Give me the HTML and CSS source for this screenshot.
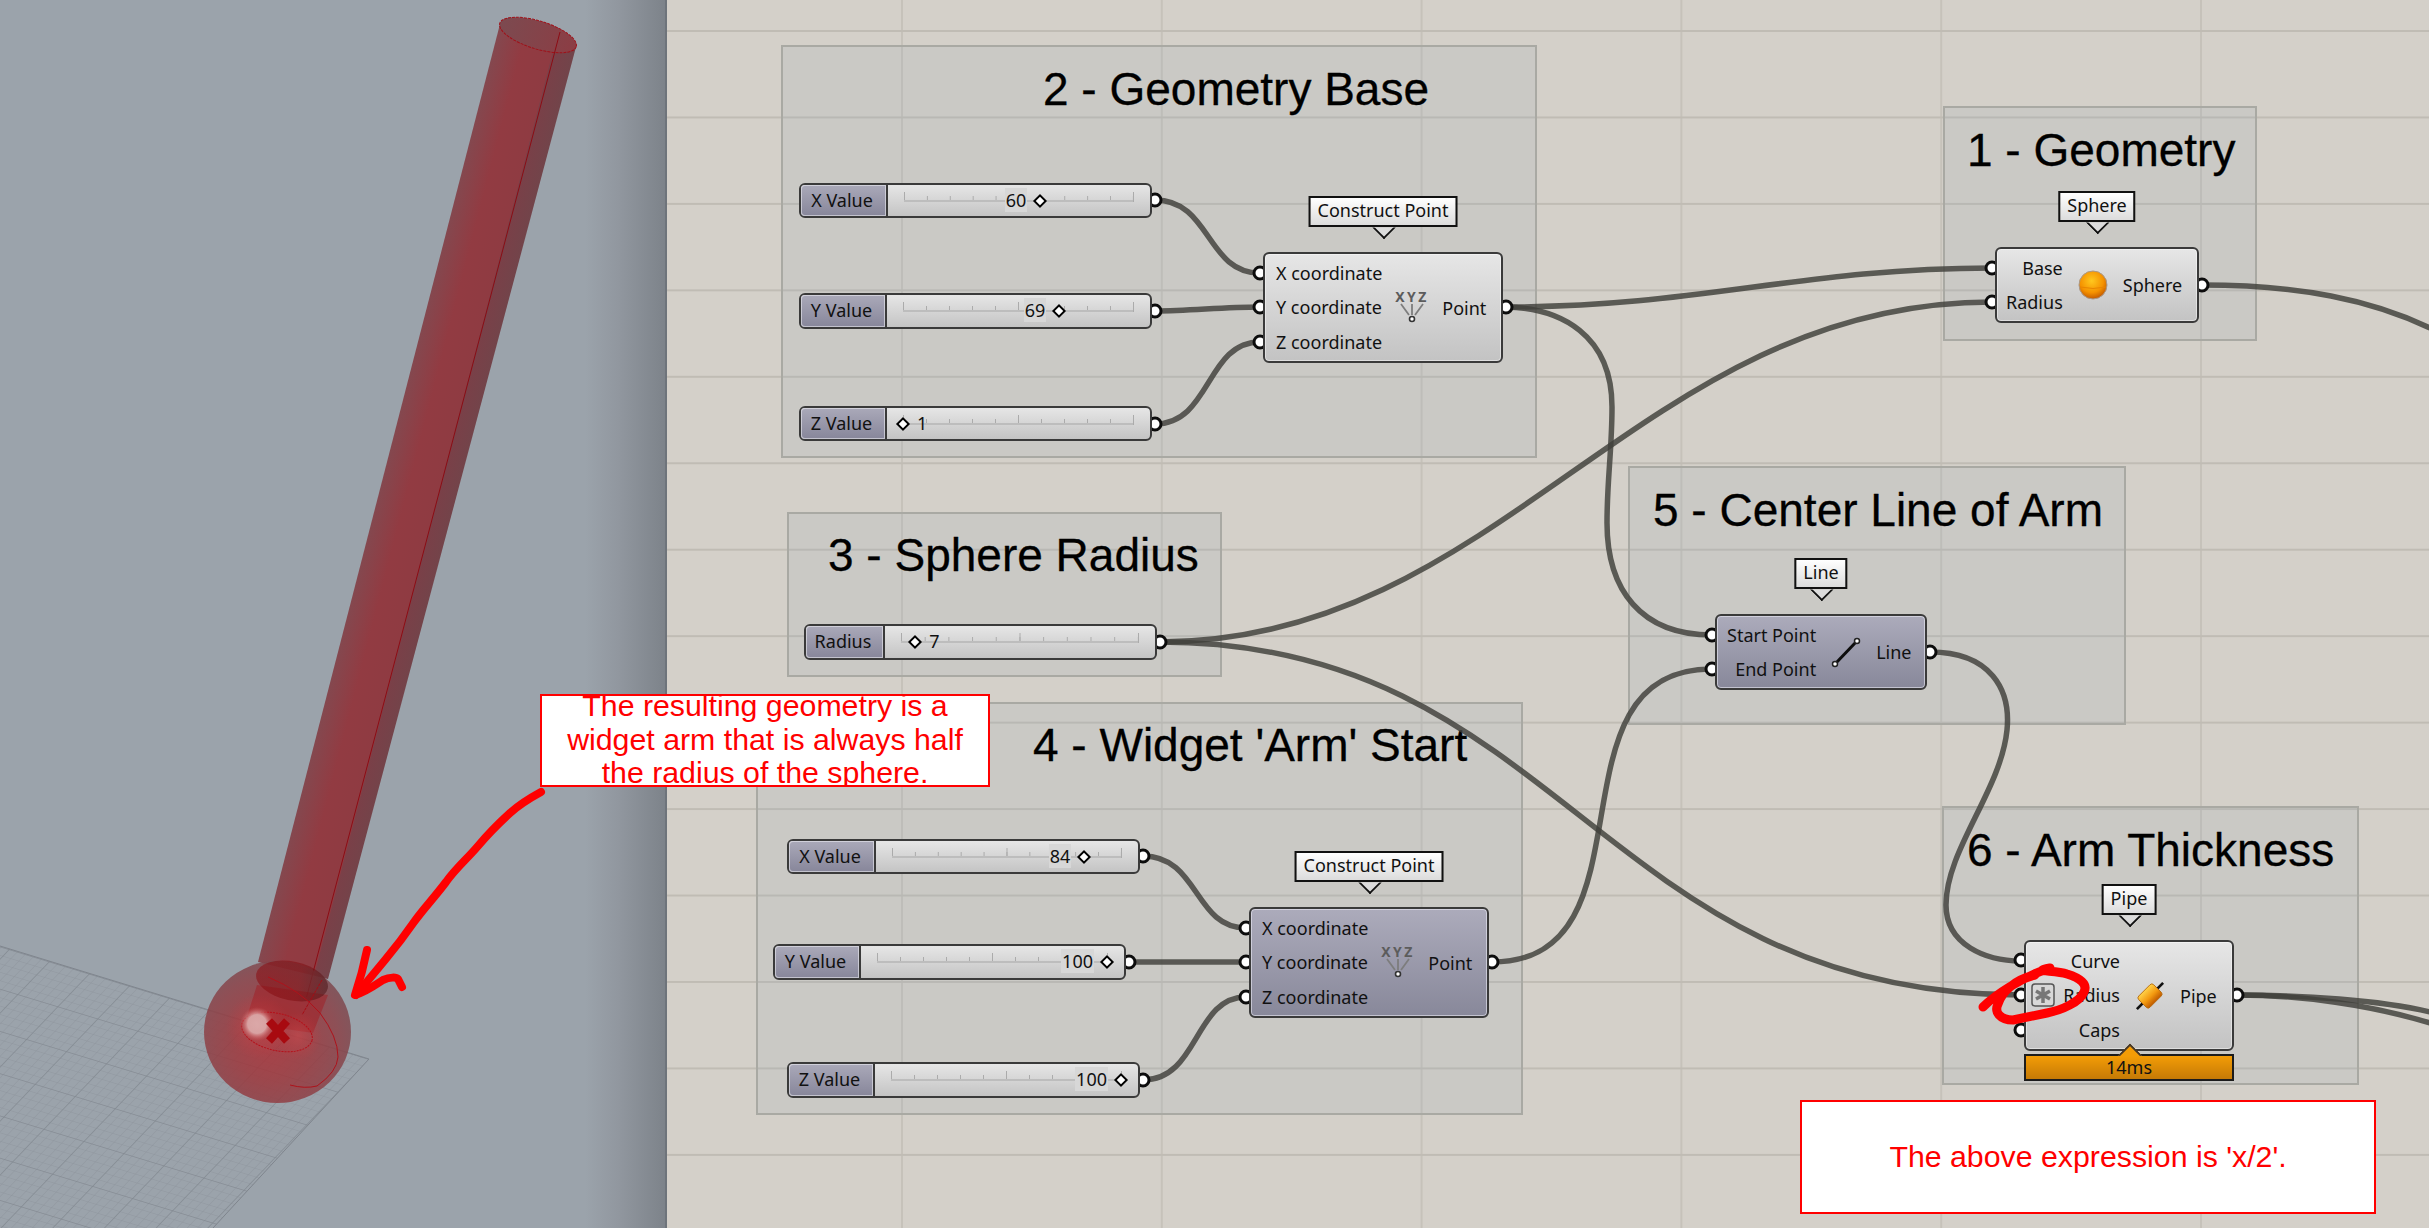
FILE: index.html
```html
<!DOCTYPE html>
<html lang="en">
<head>
<meta charset="utf-8">
<title>Grasshopper definition</title>
<link rel="stylesheet" href="styles.css">
</head>
<body>
<main class="app">
  <section class="viewport">
    <svg class="scene" viewBox="0 0 665 1228" width="665" height="1228" aria-hidden="true">
      <defs>
        <pattern id="minor" width="10" height="10" patternUnits="userSpaceOnUse" patternTransform="matrix(.8 .244 -.626 .654 369 1059)">
          <path d="M0 0H10M0 0V10" fill="none" stroke="#8c939b" stroke-width="1"/>
        </pattern>
        <pattern id="major" width="50" height="50" patternUnits="userSpaceOnUse" patternTransform="matrix(.8 .244 -.626 .654 369 1059)">
          <path d="M0 0H50M0 0V50" fill="none" stroke="#7f858d" stroke-width="1.3"/>
        </pattern>
        <linearGradient id="pipeBody" gradientUnits="userSpaceOnUse" x1="346" y1="620" x2="421.5" y2="639.5">
          <stop offset="0" stop-color="#84484f"/>
          <stop offset=".35" stop-color="#923b42"/>
          <stop offset=".74" stop-color="#8f3b42"/>
          <stop offset=".75" stop-color="#7a4048"/>
          <stop offset="1" stop-color="#72444a"/>
        </linearGradient>
        <linearGradient id="pipeCap" x1="0" x2="1" y1="0" y2="0">
          <stop offset="0" stop-color="#7c4a50"/>
          <stop offset="1" stop-color="#8c3d44"/>
        </linearGradient>
        <radialGradient id="ball" gradientUnits="userSpaceOnUse" cx="270" cy="1045" r="92">
          <stop offset="0" stop-color="#ab2f35"/>
          <stop offset=".4" stop-color="#9c363b"/>
          <stop offset=".75" stop-color="#8b4046"/>
          <stop offset="1" stop-color="#784a50"/>
        </radialGradient>
        <linearGradient id="capShade" x1="0" x2="1" y1="0" y2="0">
          <stop offset="0" stop-color="#8a0a0f"/>
          <stop offset=".6" stop-color="#800d11"/>
          <stop offset="1" stop-color="#4a1517"/>
        </linearGradient>
        <radialGradient id="shine">
          <stop offset="0" stop-color="#dba8a8"/>
          <stop offset=".55" stop-color="#d8a2a2"/>
          <stop offset="1" stop-color="#c9595c" stop-opacity="0"/>
        </radialGradient>
        <radialGradient id="glow">
          <stop offset="0" stop-color="#cf4a4e" stop-opacity=".5"/>
          <stop offset="1" stop-color="#c9393e" stop-opacity="0"/>
        </radialGradient>
      </defs>
      <polygon points="0,946 369,1059 213,1228 0,1228" fill="url(#minor)"/>
      <polygon points="0,946 369,1059 213,1228 0,1228" fill="url(#major)"/>
      <polyline points="0,946 369,1059 213,1228" fill="none" stroke="#7f858d" stroke-width="1"/>
      <path d="M500 24 L576 47 L328 979 L258 962 Z" fill="url(#pipeBody)"/>
      <ellipse cx="538" cy="35" rx="40" ry="14" transform="rotate(17 538 35)" fill="url(#pipeCap)" stroke="#a01018" stroke-width="1" stroke-dasharray="3 1"/>
      <path d="M560 32 L555 51 L405.600 620 L306.600 997" fill="none" stroke="#8c0c14" stroke-width="1"/>
      <ellipse cx="277.500" cy="1032" rx="73.500" ry="71" fill="url(#ball)" fill-opacity=".84"/>
      <path d="M257 985 L328 995 L313 1033 L245 1023 Z" fill="#a3171c" fill-opacity=".45"/>
      <ellipse cx="292" cy="981" rx="36.500" ry="19.500" transform="rotate(12 292 981)" fill="url(#capShade)" fill-opacity=".55"/>
      <path d="M322 980L302 1015" fill="none" stroke="#a50c14" stroke-width="1" stroke-dasharray="3 1"/>
      <circle cx="258" cy="1026" r="32" fill="url(#glow)"/>
      <circle cx="298" cy="1036" r="24" fill="url(#glow)"/>
      <ellipse cx="277" cy="1032" rx="36" ry="18.500" transform="rotate(13 277 1032)" fill="none" stroke="#b5101a" stroke-width="1" stroke-dasharray="2 1"/>
      <circle cx="257" cy="1024" r="17" fill="url(#shine)"/>
      <path d="M269 1021L287 1041M287 1021L269 1041" stroke="#a80a10" stroke-width="8" fill="none"/>
      <path d="M268 977 Q300 990 320 1013 Q338 1037 338 1057 Q337 1072 317 1086 Q305 1089 290 1085" fill="none" stroke="#ae121b" stroke-width="1"/>
    </svg>
  </section>

  <section class="canvas">
    <div class="group g1"><h2 class="title">1 - Geometry</h2></div>
    <div class="group g2"><h2 class="title">2 - Geometry Base</h2></div>
    <div class="group g3"><h2 class="title">3 - Sphere Radius</h2></div>
    <div class="group g4"><h2 class="title">4 - Widget 'Arm' Start</h2></div>
    <div class="group g5"><h2 class="title">5 - Center Line of Arm</h2></div>
    <div class="group g6"><h2 class="title">6 - Arm Thickness</h2></div>

    <svg class="wires" viewBox="666 0 1763 1228" width="1763" height="1228" aria-hidden="true">
      <g class="wire">
        <path d="M1154 200 C1210 200 1205 273 1259 273"/>
        <path d="M1154 311 C1190 311 1220 307 1259 307"/>
        <path d="M1154 424 C1210 424 1205 342 1259 342"/>
        <path d="M1505 307 C1700 307 1800 268 1991 268"/>
        <path d="M1505 307 C1560 308 1611 335 1611 407 C1611 450 1606 480 1606 523 C1606 590 1640 635 1711 635"/>
        <path d="M1159 642 C1500 642 1640 302 1991 302"/>
        <path d="M1159 642 C1560 642 1600 995 2020 995"/>
        <path d="M1142 856 C1198 856 1193 928 1245 928"/>
        <path d="M1128 962 L1245 962"/>
        <path d="M1142 1080 C1198 1080 1193 997 1245 997"/>
        <path d="M1491 962 C1660 962 1540 669 1711 669"/>
        <path d="M1929 652 C1990 652 2010 690 2006 730 C2000 790 1945 850 1945 905 C1945 945 1985 961 2020 961"/>
        <path d="M2201 285 C2300 285 2370 300 2429 328"/>
        <path d="M2236 995 C2300 995 2380 1000 2429 1012"/>
        <path d="M2236 995 C2300 995 2370 1005 2429 1023"/>
      </g>
      <g class="grip">
        <circle cx="1154" cy="200" r="6"/><circle cx="1154" cy="311" r="6"/><circle cx="1154" cy="424" r="6"/>
        <circle cx="1159" cy="642" r="6"/><circle cx="1142" cy="856" r="6"/><circle cx="1128" cy="962" r="6"/><circle cx="1142" cy="1080" r="6"/>
        <circle cx="1259" cy="273" r="6"/><circle cx="1259" cy="307" r="6"/><circle cx="1259" cy="342" r="6"/><circle cx="1505" cy="307" r="6"/>
        <circle cx="1245" cy="928" r="6"/><circle cx="1245" cy="962" r="6"/><circle cx="1245" cy="997" r="6"/><circle cx="1491" cy="962" r="6"/>
        <circle cx="1991" cy="268" r="6"/><circle cx="1991" cy="302" r="6"/><circle cx="2201" cy="285" r="6"/>
        <circle cx="1711" cy="635" r="6"/><circle cx="1711" cy="669" r="6"/><circle cx="1929" cy="652" r="6"/>
        <circle cx="2020" cy="960" r="6"/><circle cx="2020" cy="995" r="6"/><circle cx="2020" cy="1030" r="6"/><circle cx="2236" cy="995" r="6"/>
      </g>
    </svg>

    <div class="slider s2x"><span class="slider-name wide">X Value</span><div class="track"><div class="rail"><div class="handle" style="left:59.5%"><span class="value before">60</span><i class="diamond"></i></div></div></div></div>
    <div class="slider s2y tall"><span class="slider-name">Y Value</span><div class="track"><div class="rail"><div class="handle" style="left:68%"><span class="value before">69</span><i class="diamond"></i></div></div></div></div>
    <div class="slider s2z"><span class="slider-name">Z Value</span><div class="track"><div class="rail"><div class="handle" style="left:0%"><i class="diamond"></i><span class="value after">1</span></div></div></div></div>

    <div class="slider s3 tall"><span class="slider-name narrow">Radius</span><div class="track"><div class="rail"><div class="handle" style="left:6%"><i class="diamond"></i><span class="value after">7</span></div></div></div></div>

    <div class="slider s4x"><span class="slider-name wide">X Value</span><div class="track"><div class="rail"><div class="handle" style="left:84%"><span class="value before">84</span><i class="diamond"></i></div></div></div></div>
    <div class="slider s4y tall"><span class="slider-name">Y Value</span><div class="track"><div class="rail"><div class="handle" style="left:100%"><span class="value before">100</span><i class="diamond"></i></div></div></div></div>
    <div class="slider s4z tall"><span class="slider-name">Z Value</span><div class="track"><div class="rail"><div class="handle" style="left:100%"><span class="value before">100</span><i class="diamond"></i></div></div></div></div>

    <div class="node cp2">
      <div class="tip">Construct Point</div>
      <div class="ports"><span class="left">X coordinate</span><span class="left">Y coordinate</span><span class="left">Z coordinate</span></div>
      <svg class="icon" viewBox="0 0 30 30" aria-hidden="true"><use href="#xyz"/></svg>
      <div class="out">Point</div>
    </div>

    <div class="node cp4 dark">
      <div class="tip">Construct Point</div>
      <div class="ports"><span class="left">X coordinate</span><span class="left">Y coordinate</span><span class="left">Z coordinate</span></div>
      <svg class="icon" viewBox="0 0 30 30" aria-hidden="true">
        <g id="xyz">
          <text x="15" y="9" text-anchor="middle" class="xyz-text">XYZ</text>
          <path d="M4 11L12 22M15 11V22M26 11L18 22" fill="none" stroke="#7d7d7d" stroke-width="1.800"/>
          <circle cx="15" cy="26" r="2.500" fill="#fff" stroke="#333" stroke-width="1.600"/>
        </g>
      </svg>
      <div class="out">Point</div>
    </div>

    <div class="node sphere">
      <div class="tip">Sphere</div>
      <div class="ports"><span>Base</span><span>Radius</span></div>
      <svg class="icon" viewBox="0 0 30 30" aria-hidden="true">
        <defs>
          <radialGradient id="orb" cx=".45" cy=".35" r=".7">
            <stop offset="0" stop-color="#ffc81e"/>
            <stop offset=".6" stop-color="#f59200"/>
            <stop offset="1" stop-color="#b94e00"/>
          </radialGradient>
        </defs>
        <circle cx="15" cy="15" r="14" fill="url(#orb)" stroke="#a8988a" stroke-width="1"/>
        <path d="M2 17Q15 20 28 17" fill="none" stroke="#e98500" stroke-width="1"/>
      </svg>
      <div class="out">Sphere</div>
    </div>

    <div class="node line dark">
      <div class="tip">Line</div>
      <div class="ports"><span>Start Point</span><span>End Point</span></div>
      <svg class="icon" viewBox="0 0 30 30" aria-hidden="true">
        <path d="M4 27L26 4" stroke="#0d0d0d" stroke-width="3"/>
        <circle cx="4" cy="27" r="2.500" fill="#fff" stroke="#222" stroke-width="1.500"/>
        <circle cx="26" cy="4" r="2.500" fill="#fff" stroke="#222" stroke-width="1.500"/>
      </svg>
      <div class="out">Line</div>
    </div>

    <div class="node pipe">
      <div class="tip">Pipe</div>
      <div class="ports roomy"><span>Curve</span><span>Radius</span><span>Caps</span></div>
      <svg class="badge" viewBox="0 0 24 24" aria-hidden="true">
        <rect x="1" y="1" width="22" height="22" rx="3" fill="#d8d8d8" stroke="#555" stroke-width="1.500"/>
        <path d="M12 4V20M5 8L19 16M19 8L5 16" stroke="#777" stroke-width="3.500"/>
      </svg>
      <svg class="icon" viewBox="0 0 34 34" aria-hidden="true">
        <defs>
          <linearGradient id="cyl" x1="0" x2="0" y1="0" y2="1">
            <stop offset="0" stop-color="#ffd24a"/>
            <stop offset=".55" stop-color="#f39a10"/>
            <stop offset="1" stop-color="#c05a00"/>
          </linearGradient>
        </defs>
        <g transform="rotate(-45 17 17)">
          <path d="M-4 17H38" stroke="#111" stroke-width="3"/>
          <rect x="5" y="8" width="24" height="18" rx="3" fill="url(#cyl)" stroke="#b56a10" stroke-width="1"/>
        </g>
      </svg>
      <div class="out">Pipe</div>
      <div class="profiler">14ms</div>
    </div>
  </section>

  <svg class="ink" viewBox="0 0 2429 1228" width="2429" height="1228" aria-hidden="true">
    <path class="red" d="M541 792 C530 798 520 804 510 813 C498 824 488 834 478 846 C466 860 456 868 446 882 C434 898 424 908 414 922 C405 935 395 948 385 960 L356 995"/>
    <path class="red" d="M367 950 C364 965 360 980 355 995 C364 993 374 986 383 980 C390 977 396 977 398 979 L402 987"/>
    <path class="red loop" d="M1983 1007 C1995 995 2020 978 2050 968 C2030 972 2055 970 2067 974 C2080 978 2088 984 2084 992 C2080 1002 2062 1010 2047 1013 L2013 1020 C2000 1020 1994 1012 1998 1004 C2002 992 2014 980 2035 975"/>
  </svg>

  <div class="note note-geometry">The resulting geometry is a widget arm that is always half the radius of the sphere.</div>
  <div class="note note-expression">The above expression is 'x/2'.</div>
</main>
</body>
</html>
```

FILE: styles.css
```css
* { box-sizing: border-box; }
html, body { margin: 0; padding: 0; width: 2429px; height: 1228px; overflow: hidden; }

.app {
  position: relative;
  display: flex;
  width: 2429px;
  height: 1228px;
  font-family: "Noto Sans", "Open Sans", sans-serif;
  font-size: 18px;
  color: #111;
}

/* Rhino viewport */
.viewport {
  flex: 0 0 666px;
  height: 100%;
  border-right: 2px solid #6e747b;
  background: linear-gradient(90deg, #9ba3ab 0, #9ba3ab 88%, #91979f 93%, #7d838a 100%);
}
.scene { display: block; }

/* Grasshopper canvas */
.canvas {
  position: relative;
  flex: 1;
  height: 100%;
  overflow: hidden;
  background-color: #d4d0c9;
  background-image:
    linear-gradient(#c0bcb4 2px, transparent 2px),
    linear-gradient(90deg, #c6c2ba 2px, transparent 2px);
  background-size: 259.8px 86.46px;
  background-position: 234px 30px;
}

.group {
  position: absolute;
  border: 2px solid #a9a9a3;
  background: rgba(150, 170, 180, .16);
}
.title {
  margin: 0;
  padding-top: 17px;
  font: 400 46px/50px "Liberation Sans", Arial, sans-serif;
  -webkit-text-stroke: .3px #000;
  color: #000;
  white-space: nowrap;
}
.g1 { left: 1276px; top: 106px; width: 314px; height: 235px; }
.g1 .title { padding-left: 22px; }
.g2 { left: 114px; top: 45px; width: 756px; height: 413px; }
.g2 .title { padding-left: 260px; }
.g3 { left: 120px; top: 512px; width: 435px; height: 165px; }
.g3 .title { padding-left: 39px; padding-top: 16px; }
.g4 { left: 89px; top: 702px; width: 767px; height: 413px; }
.g4 .title { padding-left: 275px; padding-top: 16px; }
.g5 { left: 961px; top: 466px; width: 498px; height: 259px; }
.g5 .title { padding-left: 23px; }
.g6 { left: 1275px; top: 806px; width: 417px; height: 279px; }
.g6 .title { padding-left: 23px; }

/* Wires */
.wires { position: absolute; left: 0; top: 0; }
.wire path { fill: none; stroke: #3f3f3a; stroke-opacity: .82; stroke-width: 5.500; }
.grip circle { fill: #fff; stroke: #0c0c0c; stroke-width: 3; }

/* Number sliders */
.slider {
  position: absolute;
  display: flex;
  width: 353px;
  height: 35px;
  border: 2px solid #3a3a3a;
  border-radius: 6px;
  background: linear-gradient(#e6e6e6, #c4c4c4);
}
.slider.tall { height: 36px; }
.slider-name {
  flex: 0 0 86px;
  display: flex;
  align-items: center;
  justify-content: center;
  padding: 0 3px 2px 0;
  border-right: 2px solid #3a3a3a;
  border-radius: 4px 0 0 4px;
  background: linear-gradient(#aaa9b9, #87869a);
  box-shadow: inset 0 0 0 1px rgba(235, 235, 240, .6);
}
.slider-name.wide { flex-basis: 87px; }
.slider-name.narrow { flex-basis: 79px; }
.track { flex: 1; padding: 7px 16px 0 16px; }
.rail {
  position: relative;
  height: 10px;
  border-right: 1px solid #ababab;
  background:
    linear-gradient(#bdbdbd, #bdbdbd) 0 100% / 100% 2px no-repeat,
    linear-gradient(90deg, #ababab 1px, transparent 1px) 0 100% / 10% 6px repeat-x,
    linear-gradient(90deg, #ababab 1px, transparent 1px) 0 0 / 50% 100% repeat-x;
}
.handle { position: absolute; top: 9px; width: 0; height: 0; }
.diamond {
  position: absolute;
  left: -5px;
  top: -5px;
  width: 10px;
  height: 10px;
  transform: rotate(45deg);
  background: #fff;
  border: 2px solid #000;
}
.value {
  position: absolute;
  top: -13px;
  line-height: 24px;
  padding: 0 1px;
  background: #d7d7d7;
}
.value.before { right: 13px; }
.value.after { left: 13px; background: none; }

/* Components */
.node {
  position: absolute;
  display: flex;
  align-items: center;
  gap: 15px;
  padding: 0 20px 0 11px;
  border: 2px solid #3a3a3a;
  border-radius: 6px;
  background: linear-gradient(#e6e6e6, #c3c3c3);
  box-shadow: inset 0 0 0 1px rgba(255, 255, 255, .45);
}
.node.dark { background: linear-gradient(#acabbb, #88889a); box-shadow: inset 0 0 0 1px rgba(235, 235, 245, .6); }
.cp2 { left: 596px; top: 252px; width: 240px; height: 111px; }
.cp4 { left: 582px; top: 907px; width: 240px; height: 111px; }
.sphere { left: 1328px; top: 247px; width: 204px; height: 76px; padding-left: 9px; }
.line { left: 1048px; top: 614px; width: 212px; height: 76px; padding-left: 10px; }
.pipe { left: 1357px; top: 940px; width: 210px; height: 111px; padding: 0 18px 0 12px; }

.s2x { left: 132px; top: 183px; }
.s2y { left: 132px; top: 293px; }
.s2z { left: 132px; top: 406px; }
.s3  { left: 137px; top: 624px; }
.s4x { left: 120px; top: 839px; }
.s4y { left: 106px; top: 944px; }
.s4z { left: 120px; top: 1062px; }

.ports { flex: none; display: flex; flex-direction: column; text-align: right; line-height: 34.5px; white-space: nowrap; }
.ports .left { text-align: left; }
.ports.roomy { min-width: 82px; }
.icon { flex: 0 0 30px; width: 30px; height: 30px; overflow: visible; }
.out { margin-left: auto; white-space: nowrap; }
.xyz-text { font: 700 14px "Noto Sans", sans-serif; letter-spacing: 2.500px; fill: #5c5c5c; }
.badge { position: absolute; left: 5px; top: 41px; width: 24px; height: 24px; }

.tip {
  position: absolute;
  left: 50%;
  bottom: calc(100% + 27px);
  transform: translateX(-50%);
  height: 31px;
  padding: 0 7px;
  line-height: 25px;
  white-space: nowrap;
  border: 2px solid #111;
  background: linear-gradient(#fff, #dcdcdc);
}
.tip::after {
  content: "";
  position: absolute;
  left: 50%;
  bottom: -11px;
  width: 15px;
  height: 15px;
  margin-left: -7.500px;
  transform: rotate(45deg);
  border-right: 2px solid #111;
  border-bottom: 2px solid #111;
  background: #dcdcdc;
  clip-path: polygon(100% 0, 100% 100%, 0 100%);
}

.profiler {
  position: absolute;
  left: -2px;
  right: -2px;
  top: calc(100% + 5px);
  height: 27px;
  line-height: 23px;
  text-align: center;
  border: 2px solid #1c1c1c;
  background: linear-gradient(#f39c06, #c57a06);
}
.profiler::before {
  content: "";
  position: absolute;
  left: 50%;
  top: -9px;
  width: 16px;
  height: 16px;
  margin-left: -8px;
  transform: rotate(45deg);
  border-left: 2px solid #44382a;
  border-top: 2px solid #44382a;
  background: #f39c06;
  clip-path: polygon(0 0, 100% 0, 0 100%);
}

/* Annotations */
.ink { position: absolute; left: 0; top: 0; pointer-events: none; }
.red { fill: none; stroke: #f00; stroke-width: 8; stroke-linecap: round; stroke-linejoin: round; }
.red.loop { stroke-width: 9; }

.note {
  position: absolute;
  display: flex;
  align-items: center;
  justify-content: center;
  text-align: center;
  overflow: hidden;
  border: 2px solid #f00;
  background: #fff;
  color: #f00;
  font-family: "Liberation Sans", Arial, sans-serif;
  font-size: 30.300px;
}
.note-geometry { left: 540px; top: 694px; width: 450px; height: 93px; line-height: 33.5px; padding: 0 20px 2px; }
.note-expression { left: 1800px; top: 1100px; width: 576px; height: 114px; }
```
